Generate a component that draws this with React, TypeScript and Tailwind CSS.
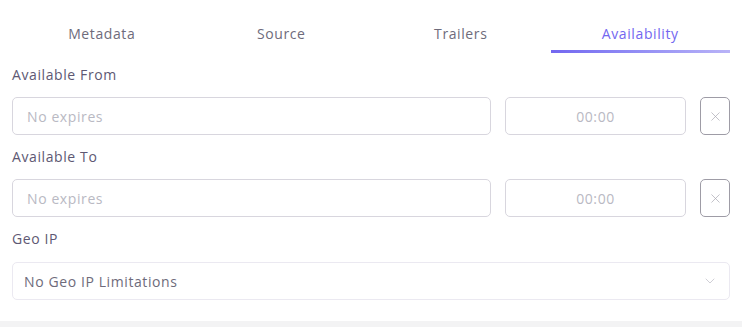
import { ChevronDown, X } from 'lucide-react';

const TABS = ['Metadata', 'Source', 'Trailers', 'Availability'];

function DateRow() {
  return (
    <div className="flex gap-[14px]">
      <input
        placeholder="No expires"
        className="flex-1 h-[38px] px-[14px] border border-[#d8d6de] rounded-[5px] text-[14px] tracking-[0.6px] text-[#6e6b7b] placeholder:text-[#b9b9c3] outline-none"
      />
      <input
        placeholder="00:00"
        className="w-[181px] h-[38px] px-[14px] border border-[#d8d6de] rounded-[5px] text-[14px] tracking-[0.6px] text-center text-[#6e6b7b] placeholder:text-[#b9b9c3] outline-none"
      />
      <button className="w-[30px] h-[38px] flex items-center justify-center border border-[#9e9ca6] rounded-[5px] text-[#a8a6b0]">
        <X size={15} strokeWidth={1.1} />
      </button>
    </div>
  );
}

export default function App() {
  const active = 'Availability';

  return (
    <div className="min-h-screen bg-[#f3f3f4]" style={{ fontFamily: '"Open Sans", "Noto Sans", sans-serif' }}>
      <div className="bg-white px-3 pb-[21px] tracking-[0.6px]">
        <div className="grid grid-cols-4">
          {TABS.map((tab) => (
            <div key={tab} className="flex flex-col items-center">
              <span
                className={`pt-[24px] pb-[6px] leading-5 text-[14px] ${tab === active ? 'text-[#7367f0]' : 'text-[#6e6b7b]'}`}
              >
                {tab}
              </span>
              <div
                className={`h-[3px] w-full ${tab === active ? 'bg-gradient-to-r from-[#7367f0] to-[#b9b3f7]' : ''}`}
              />
            </div>
          ))}
        </div>

        <div className="mt-[12px]">
          <label className="block leading-5 text-[14px] text-[#5e5873] mb-[12px]">Available From</label>
          <DateRow />
        </div>

        <div className="mt-[12px]">
          <label className="block leading-5 text-[14px] text-[#5e5873] mb-[12px]">Available To</label>
          <DateRow />
        </div>

        <div className="mt-[12px]">
          <label className="block leading-5 text-[14px] text-[#5e5873] mb-[13px]">Geo IP</label>
          <div className="flex items-center justify-between h-[38px] pl-[11px] pr-[11px] border border-[#ebe9f1] rounded-[5px]">
            <span className="text-[14px] text-[#6e6b7b]">No Geo IP Limitations</span>
            <ChevronDown size={16} strokeWidth={1.5} className="text-[#d0cfd6]" />
          </div>
        </div>
      </div>
    </div>
  );
}
